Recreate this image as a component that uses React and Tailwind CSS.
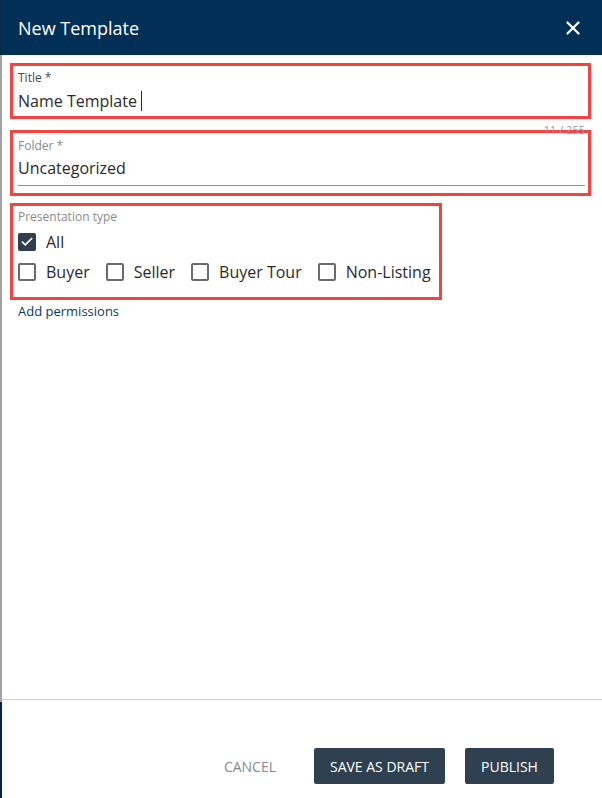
import { X, Check } from 'lucide-react';

const font = { fontFamily: '"Open Sans", "Liberation Sans", sans-serif' };

const CheckItem = ({ label, checked }) => (
  <label className="flex items-center gap-[10px] cursor-pointer">
    {checked ? (
      <span className="w-[18px] h-[18px] rounded-[2px] bg-[#2f3f4f] flex items-center justify-center">
        <Check size={14} strokeWidth={3} className="text-white" />
      </span>
    ) : (
      <span className="w-[18px] h-[18px] rounded-[2px] border-2 border-[#6b6b6b] bg-white" />
    )}
    <span className="text-[16px] text-[#2a2a2a] leading-none">{label}</span>
  </label>
);

const App = () => {
  return (
    <div className="w-[602px] h-[798px] flex bg-white overflow-hidden" style={font}>
      {/* Backdrop edge */}
      <div className="w-[2px] flex flex-col shrink-0">
        <div className="h-[55px] bg-[#0d2a47]" />
        <div className="h-[647px] bg-[#a3a3a3]" />
        <div className="flex-1 bg-[#0a2440]" />
      </div>

      {/* Dialog */}
      <div className="flex-1 flex flex-col">
        {/* Header */}
        <div className="h-[55px] bg-[#022f56] flex items-center justify-between pl-[16px] pr-[18px] shrink-0">
          <h1 className="text-[18px] text-white leading-none">New Template</h1>
          <X size={22} strokeWidth={2.5} className="text-white" />
        </div>

        {/* Body */}
        <div className="flex-1 pl-[8px] pr-[11px] pt-[8px]">
          <div className="relative">
            <div className="border-[3px] border-[#f44343] h-[56px] pl-[5px] pt-[4px]">
              <div className="text-[12px] text-[#3b4a58] leading-[16px]">Title *</div>
              <div className="flex items-center mt-[4px]">
                <span className="text-[16px] text-[#2a2a2a] leading-[22px]">Name Template</span>
                <span className="ml-[4px] w-[1px] h-[20px] bg-[#2a2a2a]" />
              </div>
            </div>
            <div className="absolute right-[6px] top-[61px] z-10 text-[11px] text-[#9a9a9a] leading-none">11 / 255</div>

            <div className="mt-[11px] border-[3px] border-[#f44343] h-[66px] pl-[5px] pr-[3px] pt-[5px]">
              <div className="text-[12px] text-[#8a8a8a] leading-[16px]">Folder *</div>
              <div className="text-[16px] text-[#2a2a2a] leading-[22px] mt-[3px] pb-[6px] border-b border-[#8e8e8e]">Uncategorized</div>
            </div>

            <div className="mt-[7px] inline-flex flex-col border-[3px] border-[#f44343] pl-[5px] pr-[8px] pt-[3px] pb-[14px]">
              <div className="text-[12px] text-[#8a8a8a] leading-[16px]">Presentation type</div>
              <div className="mt-[6px] h-[22px] flex items-center">
                <CheckItem label="All" checked />
              </div>
              <div className="mt-[8px] h-[22px] flex items-center gap-[16px]">
                <CheckItem label="Buyer" />
                <CheckItem label="Seller" />
                <CheckItem label="Buyer Tour" />
                <CheckItem label="Non-Listing" />
              </div>
            </div>

            <div className="mt-[2px] pl-[8px] text-[13px] text-[#0b3a5e] leading-[18px]">Add permissions</div>
          </div>
        </div>

        {/* Footer */}
        <div className="h-[99px] border-t border-[#cfcfcf] flex items-start justify-end pt-[48px] pr-[48px] gap-[20px] shrink-0">
          <button className="px-[18px] h-[36px] text-[14px] text-[#8a8a8a] uppercase">Cancel</button>
          <button className="w-[131px] h-[36px] rounded-[2px] bg-[#2f4150] text-[14px] text-white uppercase">Save as draft</button>
          <button className="w-[89px] h-[36px] rounded-[2px] bg-[#2f4150] text-[14px] text-white uppercase">Publish</button>
        </div>
      </div>
    </div>
  );
};

export default App;
